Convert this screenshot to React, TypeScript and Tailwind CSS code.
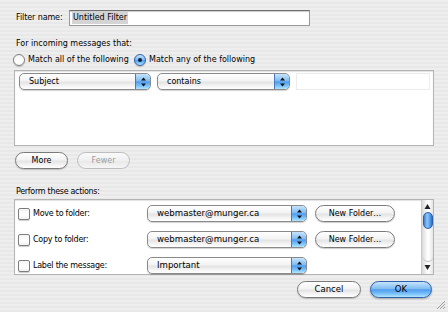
import type { ReactNode } from "react"

const aquaBlue =
  "bg-[linear-gradient(#c7e4fc,#80bcf2_45%,#4f9ced_52%,#7cc4fb_80%,#b4e6ff)]"
const aquaWhite =
  "bg-[linear-gradient(#ffffff,#f3f3f3_45%,#e4e4e4_55%,#f7f7f7_85%,#ffffff)]"

function Arrows() {
  return (
    <svg width="7" height="10" viewBox="0 0 7 10">
      <path d="M3.5 0.5 L6 3.5 L1 3.5 Z" fill="#111" />
      <path d="M3.5 9.5 L6 6.5 L1 6.5 Z" fill="#111" />
    </svg>
  )
}

function Popup({ label, className }: { label: string; className: string }) {
  return (
    <div
      className={`flex h-[17px] overflow-hidden rounded-[5px] border border-[#8a8a8a] shadow-[0_1px_1px_rgba(0,0,0,0.18)] ${aquaWhite} ${className}`}
    >
      <span className="flex-1 truncate pl-[9px] leading-[15px]">{label}</span>
      <span
        className={`flex w-[15px] items-center justify-center rounded-r-[4px] border-l border-[#4a78bf] ${aquaBlue}`}
      >
        <Arrows />
      </span>
    </div>
  )
}

function Button({ children, className }: { children: ReactNode; className: string }) {
  return (
    <div
      className={`flex h-[17px] items-center justify-center rounded-full border leading-none ${className}`}
    >
      {children}
    </div>
  )
}

function Radio({ on }: { on?: boolean }) {
  return (
    <span
      className={`flex h-[12px] w-[12px] items-center justify-center rounded-full border shadow-[0_1px_1px_rgba(0,0,0,0.2)] ${
        on
          ? `border-[#2f5fa8] ${aquaBlue}`
          : "border-[#7d7d7d] bg-[linear-gradient(#f2f2f2,#ffffff_60%,#f6f6f6)]"
      }`}
    >
      {on && <span className="h-[4px] w-[4px] rounded-full bg-[#10203a]" />}
    </span>
  )
}

function Check() {
  return (
    <span className="h-[12px] w-[12px] shrink-0 rounded-[2px] border border-[#7d7d7d] bg-[linear-gradient(#f4f4f4,#ffffff_60%,#f0f0f0)] shadow-[0_1px_1px_rgba(0,0,0,0.2)]" />
  )
}

const actions = [
  { label: "Move to folder:", value: "webmaster@munger.ca", folder: true },
  { label: "Copy to folder:", value: "webmaster@munger.ca", folder: true },
  { label: "Label the message:", value: "Important", folder: false },
]

export default function App() {
  return (
    <div className="relative h-[312px] w-[448px] overflow-hidden bg-[repeating-linear-gradient(180deg,#eeeeee_0px,#eeeeee_2px,#e8e8e8_2px,#e8e8e8_4px)] font-['DejaVu_Sans',sans-serif] text-[8px] text-black">
      <div className="ml-[16px] mt-[10px] flex h-[16px] items-center">
        <span className="w-[53px] tracking-[-0.1px]">Filter name:</span>
        <div className="flex h-[16px] w-[241px] items-center border border-[#9a9a9a] border-t-[#6e6e6e] bg-white pl-[2px] shadow-[inset_0_1px_1px_rgba(0,0,0,0.2)]">
          <span className="bg-[#d4d4d4] px-[1px] leading-[12px]">Untitled Filter</span>
        </div>
      </div>

      <div className="ml-[16px] mt-[13px] leading-[10px]">For incoming messages that:</div>

      <div className="ml-[13px] mt-[5px] flex h-[12px] items-center">
        <Radio />
        <span className="ml-[3px] w-[106px]">Match all of the following</span>
        <Radio on />
        <span className="ml-[3px]">Match any of the following</span>
      </div>

      <div className="ml-[14px] mt-[4px] h-[76px] w-[420px] border border-[#b4b4b4] bg-white pl-[4px] pt-[2px] shadow-[inset_0_1px_1px_rgba(0,0,0,0.12)]">
        <div className="flex gap-[6px]">
          <Popup label="Subject" className="w-[132px]" />
          <Popup label="contains" className="w-[133px]" />
          <div className="h-[17px] w-[134px] border border-[#ececec]" />
        </div>
      </div>

      <div className="ml-[15px] mt-[6px] flex gap-[9px]">
        <Button className={`w-[53px] border-[#7b7b7b] shadow-[0_1px_1px_rgba(0,0,0,0.2)] ${aquaWhite}`}>More</Button>
        <Button className="w-[53px] border-[#bdbdbd] bg-[linear-gradient(#fafafa,#f0f0f0_50%,#e9e9e9_55%,#f5f5f5)] text-[#9c9c9c]">
          Fewer
        </Button>
      </div>

      <div className="ml-[16px] mt-[18px] leading-[10px] tracking-[-0.3px]">Perform these actions:</div>

      <div className="ml-[14px] mt-[2px] flex h-[76px] w-[420px] border border-[#b4b4b4] bg-white shadow-[inset_0_1px_1px_rgba(0,0,0,0.12)]">
        <div className="flex flex-1 flex-col gap-[9px] pl-[3px] pt-[5px]">
          {actions.map((a) => (
            <div key={a.label} className="flex h-[17px] items-center">
              <div className="flex w-[129px] items-center gap-[3px]">
                <Check />
                <span className="tracking-[-0.25px]">{a.label}</span>
              </div>
              <Popup label={a.value} className="w-[160px] text-[8.6px]" />
              {a.folder && (
                <Button className={`ml-[8px] w-[80px] border-[#7b7b7b] shadow-[0_1px_1px_rgba(0,0,0,0.2)] ${aquaWhite}`}>
                  New Folder…
                </Button>
              )}
            </div>
          ))}
        </div>

        <div className="flex w-[12px] flex-col items-center border-l border-[#c9c9c9] bg-[linear-gradient(90deg,#d9d9d9,#f7f7f7_40%,#ffffff_60%,#e4e4e4)]">
          <svg width="7" height="7" viewBox="0 0 7 7" className="mt-[3px]">
            <path d="M3.5 1 L6.5 6 L0.5 6 Z" fill="#222" />
          </svg>
          <div className={`mt-[2px] h-[17px] w-[10px] rounded-full border border-[#2f5fa8] bg-[linear-gradient(90deg,#3d7fd6,#8fc6f6_40%,#5aa2ec_70%,#2f6dc8)]`} />
          <div className="flex-1" />
          <div className="mb-[2px] h-[6px] w-[10px] rounded-b-full border-b border-[#b8b8b8]" />
          <svg width="7" height="7" viewBox="0 0 7 7" className="mb-[3px]">
            <path d="M3.5 6 L6.5 1 L0.5 1 Z" fill="#222" />
          </svg>
        </div>
      </div>

      <div className="mr-[16px] mt-[6px] flex justify-end gap-[9px] text-[8.5px]">
        <Button className={`w-[64px] border-[#7b7b7b] shadow-[0_1px_1px_rgba(0,0,0,0.2)] ${aquaWhite}`}>Cancel</Button>
        <Button className={`w-[62px] border-[#2f5fa8] shadow-[0_1px_2px_rgba(0,0,0,0.3)] ${aquaBlue}`}>OK</Button>
      </div>

      <svg width="10" height="10" viewBox="0 0 10 10" className="absolute bottom-[2px] right-[2px]">
        <path d="M9 1 L1 9 M9 4 L4 9 M9 7 L7 9" stroke="#8a8a8a" strokeWidth="0.8" />
      </svg>
    </div>
  )
}
